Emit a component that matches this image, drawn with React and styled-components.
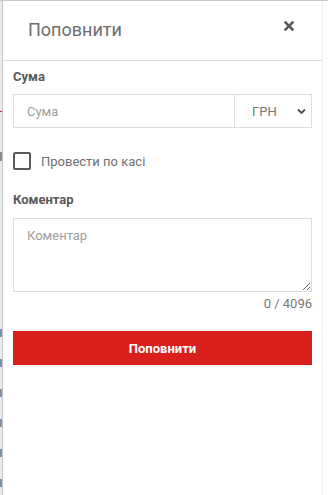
import React from "react";
import styled, { createGlobalStyle } from "styled-components";

const Global = createGlobalStyle`
  html, body { margin: 0; padding: 0; background: #fff; }
  body { font-family: Roboto, "Noto Sans", Arial, sans-serif; }
  * { box-sizing: border-box; }
`;

const Page = styled.div`
  display: flex;
  width: 328px;
  height: 495px;
  border-top: 1px solid #c9c9c9;
  overflow: hidden;
`;

const Strip = styled.div`
  width: 3px;
  flex: none;
  background: #ececec;
  border-right: 1px solid #c4c4c4;
  display: flex;
  flex-direction: column;
`;

const Mark = styled.div`
  height: ${(p) => p.h || 1}px;
  margin-top: ${(p) => p.top}px;
  background: ${(p) => p.color};
`;

const Panel = styled.div`
  width: 320px;
  flex: none;
  background: #fff;
  display: flex;
  flex-direction: column;
  border-right: 1px solid #f1f1f1;
`;

const Header = styled.div`
  height: 60px;
  flex: none;
  display: flex;
  align-items: center;
  justify-content: space-between;
  padding: 0 28px 0 25px;
  border-bottom: 1px solid #dcdcdc;
`;

const Title = styled.h2`
  margin: -3px 0 0 0;
  font-size: 18px;
  font-weight: 400;
  color: #6d6d6d;
`;

const Close = styled.button`
  border: 0;
  background: none;
  padding: 0;
  width: 10px;
  height: 10px;
  display: flex;
  margin-top: -9px;
  cursor: pointer;
`;

const Body = styled.div`
  padding: 8px 10px 0 10px;
  display: flex;
  flex-direction: column;
`;

const Label = styled.div`
  font-size: 13px;
  font-weight: 700;
  color: #585858;
  line-height: 16px;
  margin-top: ${(p) => p.top || 0}px;
  margin-bottom: ${(p) => p.bottom || 10}px;
`;

const InputRow = styled.div`
  display: flex;
  height: 34px;
  border: 1px solid #dedede;
`;

const AmountInput = styled.input`
  flex: 1;
  min-width: 0;
  border: 0;
  outline: none;
  padding: 0 13px;
  font: 400 13px Roboto, sans-serif;
  color: #555;
  &::placeholder { color: #9e9e9e; }
`;

const SelectWrap = styled.div`
  position: relative;
  width: 77px;
  border-left: 1px solid #dedede;
  display: flex;
`;

const Select = styled.select`
  appearance: none;
  -webkit-appearance: none;
  border: 0;
  outline: none;
  background: #fff;
  width: 100%;
  padding: 0 0 0 17px;
  font: 400 13px Roboto, sans-serif;
  color: #777;
`;

const Chevron = styled.svg`
  position: absolute;
  right: 5px;
  top: 13px;
  pointer-events: none;
`;

const CheckRow = styled.label`
  display: flex;
  align-items: center;
  gap: 10px;
  margin-top: 24px;
  font-size: 13px;
  color: #6f6f6f;
`;

const Box = styled.span`
  width: 18px;
  height: 18px;
  border: 2px solid #5b5b5b;
  border-radius: 2px;
  flex: none;
`;

const TextArea = styled.textarea`
  height: 74px;
  border: 1px solid #dedede;
  outline: none;
  padding: 9px 13px;
  font: 400 13px Roboto, sans-serif;
  color: #555;
  resize: vertical;
  display: block;
  &::placeholder { color: #9e9e9e; }
`;

const Counter = styled.div`
  text-align: right;
  font-size: 13px;
  color: #777;
  margin-top: 5px;
  line-height: 14px;
`;

const Submit = styled.button`
  margin-top: 20px;
  height: 34px;
  border: 0;
  background: #d9201c;
  color: #fff;
  font: 700 13px Roboto, sans-serif;
  cursor: pointer;
`;

export default function App() {
  return (
    <>
      <Global />
      <Page>
        <Strip>
          <Mark top={110} color="#d9201c" />
          <Mark top={40} h={9} color="#8a8a8a" />
          <Mark top={168} h={8} color="#7c92a8" />
          <Mark top={22} h={8} color="#7c92a8" />
          <Mark top={22} h={8} color="#7c92a8" />
          <Mark top={22} h={8} color="#7c92a8" />
          <Mark top={22} h={8} color="#7c92a8" />
          <Mark top={22} h={8} color="#7c92a8" />
        </Strip>
        <Panel>
          <Header>
            <Title>Поповнити</Title>
            <Close aria-label="close">
              <svg width="10" height="10" viewBox="0 0 10 10">
                <path d="M1.5 1.5 L8.5 8.5 M8.5 1.5 L1.5 8.5" stroke="#5a5a5a" strokeWidth="2.6" strokeLinecap="square" />
              </svg>
            </Close>
          </Header>
          <Body>
            <Label bottom={9}>Сума</Label>
            <InputRow>
              <AmountInput placeholder="Сума" />
              <SelectWrap>
                <Select defaultValue="uah">
                  <option value="uah">ГРН</option>
                </Select>
                <Chevron width="9" height="7" viewBox="0 0 9 7">
                  <path d="M1 1.5 L4.5 5 L8 1.5" fill="none" stroke="#4a4a4a" strokeWidth="1.8" />
                </Chevron>
              </SelectWrap>
            </InputRow>
            <CheckRow>
              <Box />
              Провести по касі
            </CheckRow>
            <Label top={22}>Коментар</Label>
            <TextArea placeholder="Коментар" />
            <Counter>0 / 4096</Counter>
            <Submit>Поповнити</Submit>
          </Body>
        </Panel>
      </Page>
    </>
  );
}
